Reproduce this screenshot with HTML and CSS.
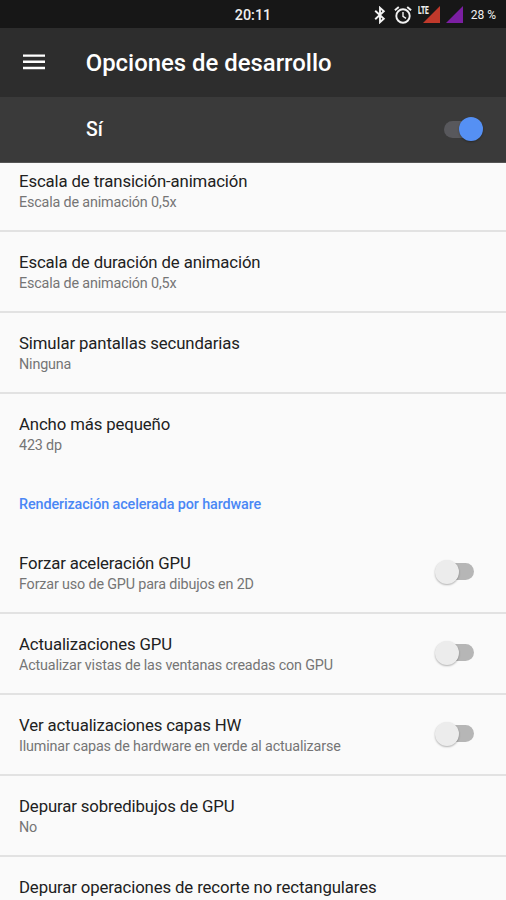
FILE: index.html
```html
<!DOCTYPE html>
<html lang="es">
<head>
<meta charset="utf-8">
<title>Opciones de desarrollo</title>
<link rel="stylesheet" href="styles.css">
</head>
<body>
<div class="status">
  <span class="clock">20:11</span>
  <div class="tray">
    <svg class="bluetooth" width="12" height="18" viewBox="0 0 12 18" fill="none" stroke="#f2f2f2" stroke-width="1.9"><path d="M1.2 4.8 9.8 12.8 6 16.2V1.8L9.8 5.2 1.2 13.2"/></svg>
    <svg class="alarm" width="18" height="18" viewBox="0 0 18 18" fill="none" stroke="#f2f2f2" stroke-width="1.9"><circle cx="9" cy="10" r="6.7"/><path d="M.9 4.3 4.8 1M17.1 4.3 13.2 1"/><path stroke-width="1.4" d="M9 6v4.4l3 1.9"/></svg>
    <div class="lte"><svg width="17" height="17" viewBox="0 0 17 17"><path fill="#c0392b" d="M17 0v17H0z"/></svg><span class="lte-label">LTE</span></div>
    <svg class="signal" width="17" height="17" viewBox="0 0 17 17"><path fill="#7b1fa2" d="M17 0v17H0z"/></svg>
    <span class="battery">28 %</span>
  </div>
</div>
<header class="toolbar">
  <svg class="menu" width="22" height="16" viewBox="0 0 22 16" fill="#fff"><path d="M0 .4h22v2.4H0zM0 6.6h22V9H0zM0 12.8h22v2.4H0z"/></svg>
  <h1 class="heading">Opciones de desarrollo</h1>
</header>
<div class="master"><span class="master-label">Sí</span><span class="switch on"><span class="thumb"></span></span></div>
<main class="list">
  <div class="items">
    <div class="row"><div class="text"><div class="title">Escala de transición-animación</div><div class="summary">Escala de animación 0,5x</div></div></div>
    <div class="row"><div class="text"><div class="title">Escala de duración de animación</div><div class="summary">Escala de animación 0,5x</div></div></div>
    <div class="row"><div class="text"><div class="title">Simular pantallas secundarias</div><div class="summary">Ninguna</div></div></div>
    <div class="row last"><div class="text"><div class="title">Ancho más pequeño</div><div class="summary">423 dp</div></div></div>
    <h2 class="category">Renderización acelerada por hardware</h2>
    <div class="row"><div class="text"><div class="title">Forzar aceleración GPU</div><div class="summary">Forzar uso de GPU para dibujos en 2D</div></div><span class="switch"><span class="thumb"></span></span></div>
    <div class="row"><div class="text"><div class="title">Actualizaciones GPU</div><div class="summary">Actualizar vistas de las ventanas creadas con GPU</div></div><span class="switch"><span class="thumb"></span></span></div>
    <div class="row"><div class="text"><div class="title">Ver actualizaciones capas HW</div><div class="summary">Iluminar capas de hardware en verde al actualizarse</div></div><span class="switch"><span class="thumb"></span></span></div>
    <div class="row"><div class="text"><div class="title">Depurar sobredibujos de GPU</div><div class="summary">No</div></div></div>
    <div class="row last"><div class="text"><div class="title">Depurar operaciones de recorte no rectangulares</div></div></div>
  </div>
</main>
</body>
</html>
```
FILE: styles.css
```css
* { box-sizing: border-box; }
body {
  margin: 0;
  height: 900px;
  overflow: hidden;
  display: flex;
  flex-direction: column;
  background: #fafafa;
  font-family: Roboto, "Liberation Sans", sans-serif;
}
.status {
  flex: none;
  height: 28px;
  display: grid;
  grid-template-columns: 1fr auto 1fr;
  align-items: center;
  background: #171717;
  color: #f0f0f0;
}
.clock { grid-column: 2; font-size: 14.35px; font-weight: 500; line-height: 28px; padding-top: 2px; }
.tray { display: flex; align-items: center; justify-content: flex-end; padding: 0 10px 1px 0; height: 28px; }
.bluetooth { margin-right: 8px; }
.alarm { margin-right: 11px; }
.lte { position: relative; height: 17px; margin-right: 6px; }
.lte svg, .signal { display: block; }
.lte-label {
  position: absolute;
  left: -5px;
  top: 0;
  font-size: 10px;
  line-height: 10px;
  font-weight: 900;
  transform: scaleX(.66);
  transform-origin: left;
}
.battery { font-size: 12px; line-height: 26px; margin-left: 8px; padding-top: 1px; }
.toolbar {
  flex: none;
  height: 69px;
  display: flex;
  align-items: center;
  padding-left: 22.7px;
  background: #2d2d2d;
  color: #fff;
}
.menu { margin-bottom: 1px; }
.heading { margin: 0 0 0 41px; font-size: 23.9px; font-weight: 500; line-height: 32px; }
.master {
  flex: none;
  height: 66px;
  display: flex;
  align-items: center;
  justify-content: space-between;
  padding: 0 23px 1px 86px;
  background: #3a3a3a;
  border-bottom: 1px solid #555;
  color: #fff;
}
.master-label { font-size: 19.4px; font-weight: 500; line-height: 24px; padding-top: 1px; }
.list { flex: 1; min-height: 0; overflow: hidden; }
.items { margin-top: -12.2px; }
.row {
  height: 81.1px;
  display: flex;
  justify-content: space-between;
  align-items: flex-start;
  padding: 19px 32px 0 19px;
  border-bottom: 2px solid #e2e2e2;
}
.row.last { border-bottom: 0; }
.title { font-size: 16.75px; line-height: 22px; letter-spacing: -.12px; color: #212121; white-space: nowrap; }
.summary { padding-top: 1px; font-size: 14.35px; line-height: 20px; letter-spacing: -.16px; color: #757575; white-space: nowrap; }
.category {
  margin: 0;
  height: 57.9px;
  padding: 20px 19px 0;
  font-size: 14.35px;
  line-height: 20px;
  letter-spacing: -.1px;
  font-weight: 500;
  color: #4a87f5;
}
.switch {
  flex: none;
  position: relative;
  width: 39px;
  height: 25px;
  display: flex;
  align-items: center;
  margin-top: 7px;
}
.switch::before {
  content: "";
  position: absolute;
  top: 4px;
  right: 0;
  width: 30px;
  height: 17px;
  border-radius: 9px;
  background: #b6b6b6;
}
.switch.on { justify-content: flex-end; margin-top: 0; }
.switch.on::before { right: auto; left: 0; background: #58585c; }
.thumb { position: relative; width: 24px; height: 24px; border-radius: 50%; background: #ececec; box-shadow: 0 1px 2px rgba(0, 0, 0, .3); }
.on .thumb { background: #5590f4; }
```
